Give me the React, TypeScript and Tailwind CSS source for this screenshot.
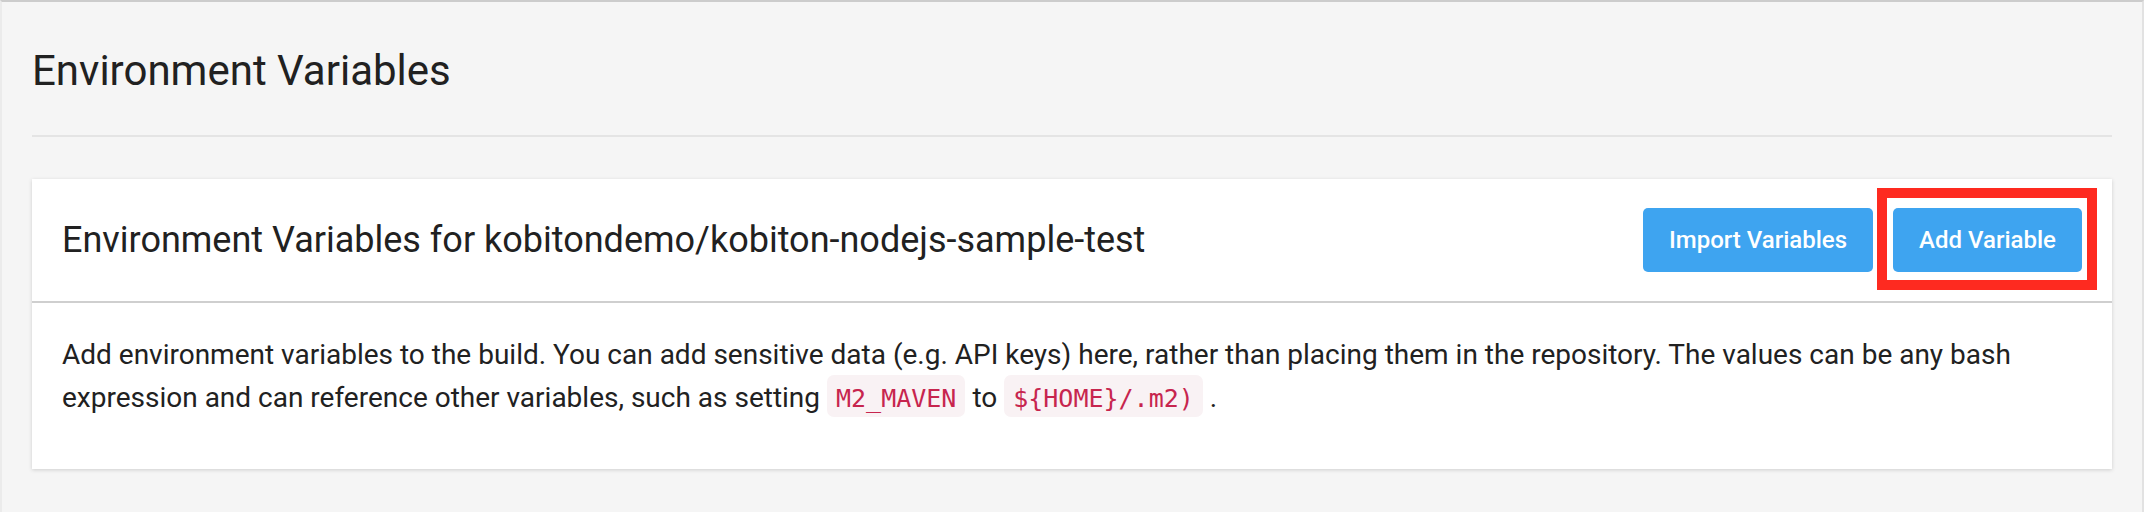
import React from "react";

export default function App() {
  return (
    <div
      className="h-[512px] w-full overflow-hidden bg-[#f5f5f5] border-t-2 border-t-[#cccccc] border-l-2 border-l-[#ebebeb] border-r-2 border-r-[#e2e2e2] px-[30px] pt-[44px] text-[#212121]"
      style={{ fontFamily: "Roboto, 'Noto Sans', sans-serif" }}
    >
      <h1 className="text-[42px] leading-[50px] font-normal">Environment Variables</h1>
      <div className="mt-[39px] h-[2px] bg-[#e4e4e4]" />
      <div className="mt-[42px] bg-white shadow-[0_1px_4px_rgba(0,0,0,0.16)]">
        <div className="flex h-[124px] items-center justify-between px-[30px] border-b-2 border-b-[#cfcfcf]">
          <h2 className="text-[36px] leading-[44px] font-normal">
            Environment Variables for kobitondemo/kobiton-nodejs-sample-test
          </h2>
          <div className="flex items-center gap-[20px]">
            <button className="h-[64px] w-[230px] rounded-[5px] bg-[#3ea4f0] text-[24px] font-medium text-white">
              Import Variables
            </button>
            <span className="relative inline-flex">
              <button className="h-[64px] w-[189px] rounded-[5px] bg-[#3ea4f0] text-[24px] font-medium text-white">
                Add Variable
              </button>
              <span className="pointer-events-none absolute -left-[16px] -top-[20px] -right-[15px] -bottom-[18px] border-[10px] border-[#fe2a20]" />
            </span>
          </div>
        </div>
        <div className="px-[30px] pt-[30px] pb-[49px]">
          <p className="text-[28px] leading-[43px]">
            Add environment variables to the build. You can add sensitive data (e.g. API keys) here, rather than placing them in the repository. The values can be any bash expression and can reference other variables, such as setting{" "}
            <code
              className="rounded-[7px] bg-[#f9f2f4] px-[9px] pt-[9px] pb-[4px] text-[25px] text-[#c7254e]"
              style={{ fontFamily: "'DejaVu Sans Mono', 'Liberation Mono', monospace" }}
            >
              M2_MAVEN
            </code>{" "}
            to{" "}
            <code
              className="rounded-[7px] bg-[#f9f2f4] px-[9px] pt-[9px] pb-[4px] text-[25px] text-[#c7254e]"
              style={{ fontFamily: "'DejaVu Sans Mono', 'Liberation Mono', monospace" }}
            >
              {"${HOME}/.m2)"}
            </code>{" "}
            .
          </p>
        </div>
      </div>
    </div>
  );
}
